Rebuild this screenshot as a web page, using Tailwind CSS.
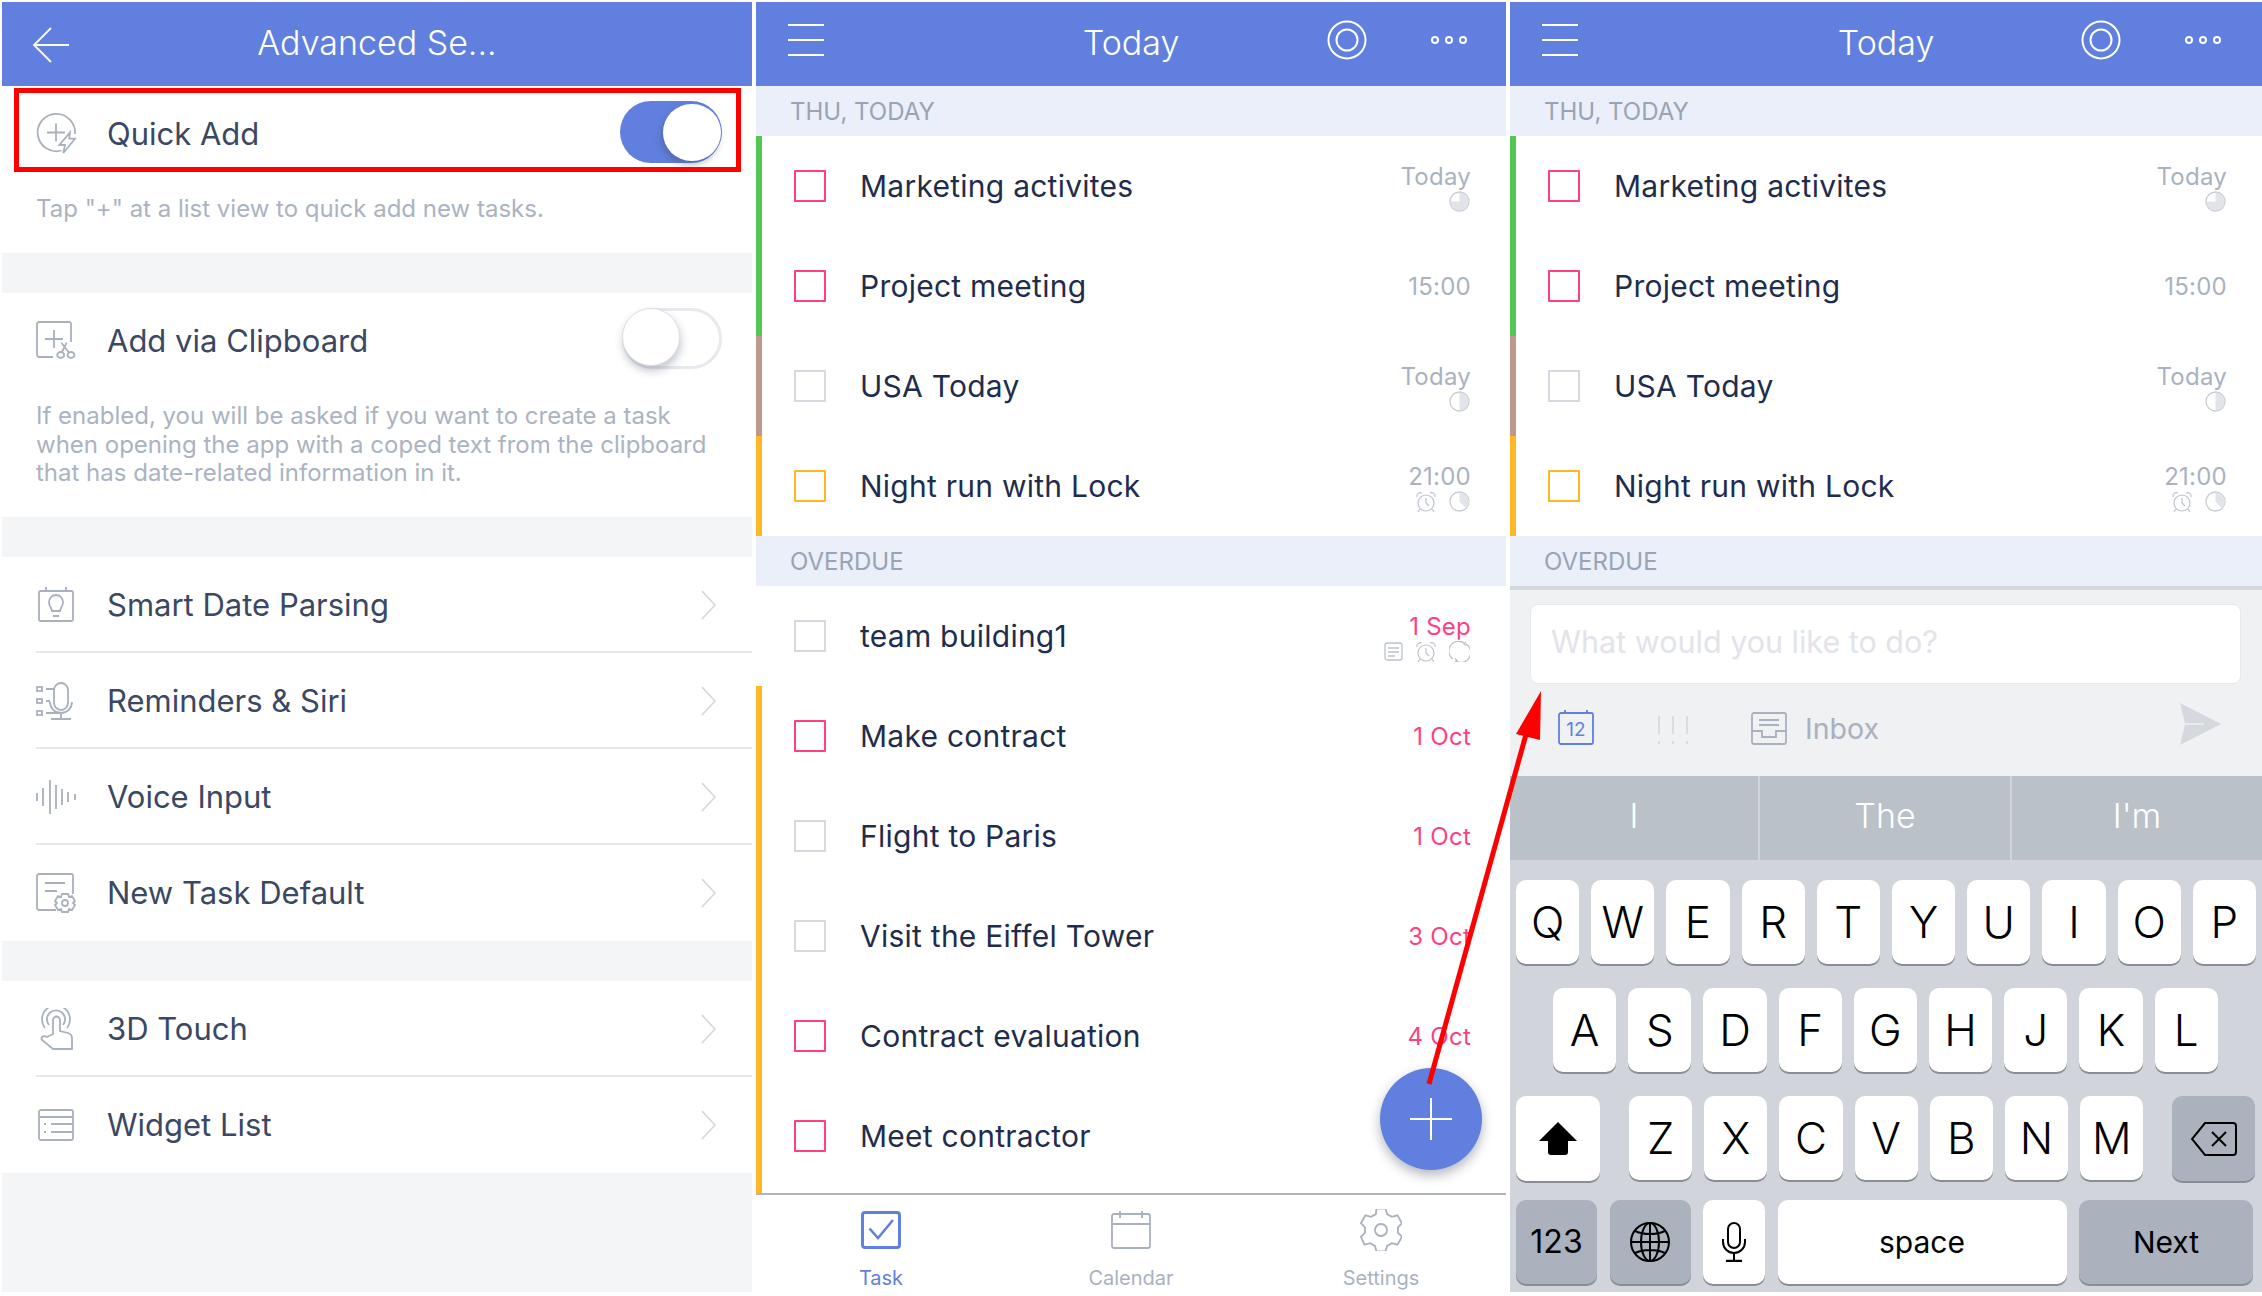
<!DOCTYPE html>
<html lang="en">
<head>
  <meta charset="UTF-8" />
  <title>Quick Add</title>
  <script src="https://cdn.jsdelivr.net/npm/@tailwindcss/browser@4"></script>
</head>
<body class="bg-white font-['Inter',sans-serif]">
<div class="relative w-[2262px] h-[1296px] overflow-hidden flex pl-[2px] pt-[2px] gap-[4px]">

  <!-- Settings panel -->
  <div class="relative w-[750px] h-[1290px] flex flex-col bg-[#f4f5f7] text-[#3a4863]">
    <div class="relative h-[84px] bg-[#617fde] text-white flex items-center justify-center text-[34px] font-light">
      <svg class="absolute left-[30px] top-[25px]" width="38" height="36" viewBox="0 0 38 36" fill="none" stroke="#fff" stroke-width="1.800"><path d="M19 1 2 18l17 17M2 18h35"/></svg>
      <span class="-mt-[4px]">Advanced Se...</span>
    </div>

    <div class="bg-white h-[167px]">
      <div class="h-[94px] flex items-center pl-[34px] pr-[30px]">
        <svg class="w-[40px] h-[40px] overflow-visible" viewBox="0 0 40 40" fill="none" stroke="#a9b0be" stroke-width="1.800"><path d="M39 21A18.700 18.700 0 1 0 25.500 37.500"/><path d="M20 10.500v18M11 19.500h18"/><path d="M34 19.300 23.300 32H29l-1.700 8L39 25.700h-5.700z"/></svg>
        <span class="ml-[31px] text-[31px] mt-[2px]">Quick Add</span>
        <div class="ml-auto -mt-[3px] relative w-[102px] h-[62px] rounded-full bg-[#617fde]">
          <div class="absolute right-[1px] top-[3px] w-[58px] h-[57px] rounded-full bg-white shadow-[-2px_4px_6px_rgba(60,70,90,0.35)]"></div>
        </div>
      </div>
      <p class="pl-[34px] h-[58px] leading-[58px] text-[24px] text-[#abb3c1]">Tap "+" at a list view to quick add new tasks.</p>
    </div>

    <div class="h-[40px] shrink-0"></div>

    <div class="bg-white h-[224px]">
      <div class="h-[94px] flex items-center pl-[34px] pr-[30px]">
        <svg class="w-[40px] h-[38px] overflow-visible" viewBox="0 0 40 38" fill="none" stroke="#a9b0be" stroke-width="1.800"><path d="M17 36H3a2 2 0 0 1-2-2V3a2 2 0 0 1 2-2h30a2 2 0 0 1 2 2v18"/><path d="M18 9v18M9 18h18"/><path d="M25.300 21.700 33.300 32M30.700 21.700 26 31"/><ellipse cx="24.700" cy="34" rx="3.500" ry="3"/><ellipse cx="35" cy="34" rx="3.500" ry="3"/></svg>
        <span class="ml-[31px] text-[31px] mt-[2px]">Add via Clipboard</span>
        <div class="ml-auto -mt-[3px] relative w-[100px] h-[61px] rounded-full bg-white border-[3px] border-[#e8e9ee]">
          <div class="absolute -left-[3px] -top-[3px] w-[58px] h-[58px] rounded-full bg-white border border-[#dfe1e7] shadow-[1px_5px_8px_rgba(60,70,90,0.3)]"></div>
        </div>
      </div>
      <p class="pl-[34px] pt-[15px] text-[24px] leading-[28.5px] text-[#abb3c1]">If enabled, you will be asked if you want to create a task<br>when opening the app with a coped text from the clipboard<br>that has date-related information in it.</p>
    </div>

    <div class="h-[40px] shrink-0"></div>

    <div id="settingsA" class="bg-white"></div>
    <div class="h-[40px] shrink-0"></div>
    <div id="settingsB" class="bg-white"></div>

    <!-- highlight -->
    <div class="absolute left-[12px] top-[86px] w-[727px] h-[84px] border-[5px] border-[#ff0000]"></div>
  </div>

  <!-- Today panel -->
  <div class="relative w-[750px] h-[1290px] flex flex-col bg-white">
    <div class="relative h-[84px] bg-[#617fde] text-white flex items-center justify-center text-[34px] font-light shrink-0">
      <svg class="absolute left-[32px] top-[21px]" width="36" height="34" viewBox="0 0 36 34" stroke="#fff" stroke-width="2"><path d="M0 2h36M0 17h36M0 32h36"/></svg>
      <span class="-mt-[4px]">Today</span>
      <svg class="absolute left-[571px] top-[18px]" width="40" height="40" viewBox="0 0 40 40" fill="none" stroke="#fff" stroke-width="2"><circle cx="20" cy="20" r="18.500"/><circle cx="20" cy="20" r="10.500"/></svg>
      <svg class="absolute left-[675px] top-[33px]" width="36" height="10" viewBox="0 0 36 10" fill="none" stroke="#fff" stroke-width="2"><circle cx="4" cy="5" r="3"/><circle cx="18" cy="5" r="3"/><circle cx="32" cy="5" r="3"/></svg>
    </div>
    <div class="h-[50px] bg-[#eaeffa] pl-[34px] pt-[2px] flex items-center text-[24px] text-[#9aa3b3] shrink-0">THU, TODAY</div>
    <div id="todayRows"></div>
    <div class="h-[50px] bg-[#eaeffa] pl-[34px] pt-[2px] flex items-center text-[24px] text-[#9aa3b3] shrink-0">OVERDUE</div>
    <div id="overdueRows" class="h-[607px] overflow-hidden"></div>
    <div class="flex-1 border-t-2 border-[#aeb4c0] relative text-[20px] text-[#aab2c0]">
      <div class="absolute left-[85px] top-[16px] w-[80px] flex flex-col items-center text-[#617fde]">
        <svg width="40" height="38" viewBox="0 0 40 38" fill="none" stroke="#617fde"><rect x="1.500" y="1.500" width="37" height="35" rx="2.500" stroke-width="3"/><path d="M8.500 17.500l8.500 9.500L32 9" stroke-width="2.500"/></svg>
        <span class="mt-[17px] leading-[24px]">Task</span>
      </div>
      <div class="absolute left-[325px] top-[16px] w-[100px] flex flex-col items-center">
        <svg width="40" height="38" viewBox="0 0 40 38" fill="none" stroke="#a9b0be" stroke-width="1.800"><rect x="1" y="3" width="38" height="34" rx="2"/><path d="M1 13h38M9 0v7M31 0v7"/></svg>
        <span class="mt-[17px] leading-[24px]">Calendar</span>
      </div>
      <div class="absolute left-[575px] top-[14px] w-[100px] flex flex-col items-center">
        <svg width="42" height="42" viewBox="0 0 42 42" fill="none" stroke="#a9b0be" stroke-width="1.800"><path d="M16.500 1.500h9l1.600 5.600 4.700 2.700 5.700-1.400 4.500 7.800-4.100 4.200v5.200l4.100 4.200-4.500 7.800-5.700-1.400-4.700 2.700-1.600 5.600h-9l-1.600-5.600-4.700-2.700-5.700 1.400L.9 29.800 5 25.600v-5.200L.9 16.200l4.500-7.800 5.700 1.400 4.700-2.700z" transform="translate(0 -2)"/><circle cx="21" cy="21" r="6"/></svg>
        <span class="mt-[15px] leading-[24px]">Settings</span>
      </div>
    </div>
    <div class="absolute left-[624px] top-[1066px] w-[102px] h-[102px] rounded-full bg-[#617fde] shadow-[0_5px_12px_rgba(60,70,90,0.4)] flex items-center justify-center">
      <svg width="42" height="42" viewBox="0 0 42 42" stroke="#fff" stroke-width="2"><path d="M21 0v42M0 21h42"/></svg>
    </div>
  </div>

  <!-- Quick add panel -->
  <div class="relative w-[752px] h-[1290px] flex flex-col bg-white">
    <div class="relative h-[84px] bg-[#617fde] text-white flex items-center justify-center text-[34px] font-light shrink-0">
      <svg class="absolute left-[32px] top-[21px]" width="36" height="34" viewBox="0 0 36 34" stroke="#fff" stroke-width="2"><path d="M0 2h36M0 17h36M0 32h36"/></svg>
      <span class="-mt-[4px]">Today</span>
      <svg class="absolute left-[571px] top-[18px]" width="40" height="40" viewBox="0 0 40 40" fill="none" stroke="#fff" stroke-width="2"><circle cx="20" cy="20" r="18.500"/><circle cx="20" cy="20" r="10.500"/></svg>
      <svg class="absolute left-[675px] top-[33px]" width="36" height="10" viewBox="0 0 36 10" fill="none" stroke="#fff" stroke-width="2"><circle cx="4" cy="5" r="3"/><circle cx="18" cy="5" r="3"/><circle cx="32" cy="5" r="3"/></svg>
    </div>
    <div class="h-[50px] bg-[#eaeffa] pl-[34px] pt-[2px] flex items-center text-[24px] text-[#9aa3b3] shrink-0">THU, TODAY</div>
    <div id="todayRows2"></div>
    <div class="h-[50px] bg-[#eaeffa] pl-[34px] pt-[2px] flex items-center text-[24px] text-[#9aa3b3] shrink-0">OVERDUE</div>

    <div class="h-[190px] shrink-0 bg-[#eff1f3] border-t-[4px] border-[#d5d7de] pl-[20px] pr-[21px] pt-[14px]">
      <div class="h-[80px] rounded-[8px] bg-white border border-[#e8e9ed] flex items-center pl-[20px] pb-[4px] text-[30.500px] text-[#e2e4e9]">What would you like to do?</div>
      <div class="relative mt-[26px] flex items-center h-[40px] text-[28.500px] text-[#a9b0be]">
        <svg class="absolute left-[28px] top-0" width="36" height="35" viewBox="0 0 36 35" fill="none" stroke="#617fde" stroke-width="1.800"><rect x="1" y="3" width="34" height="31" rx="2"/><path d="M7 0v4M29 0v4"/><text x="18" y="26" text-anchor="middle" font-size="19" fill="#617fde" stroke="none" font-family="Inter">12</text></svg>
        <svg class="absolute left-[128px] top-[6px]" width="30" height="28" viewBox="0 0 30 28" stroke="#d4d7dd" stroke-width="1.600"><path d="M1 0v18M15 0v18M29 0v18M1 25v3M15 25v3M29 25v3"/></svg>
        <svg class="absolute left-[221px] top-[2px]" width="36" height="33" viewBox="0 0 36 33" fill="none" stroke="#a9b0be" stroke-width="1.800"><rect x="1" y="1" width="34" height="31" rx="2"/><path d="M8 8h20M8 13h20M1 19h10v6h14v-6h10"/></svg>
        <span class="absolute left-[275px] top-[1px] leading-[36px]">Inbox</span>
        <svg class="absolute left-[650px] -top-[7px]" width="42" height="42" viewBox="0 0 42 42"><path d="M0 0 41 21 0 42l5-21z" fill="#d5d8dd"/><path d="M5 21h19" stroke="#eff1f3" stroke-width="1.500"/></svg>
      </div>
    </div>

    <div class="h-[84px] shrink-0 bg-[#bac1c9] flex text-white text-[34px] font-light">
      <div class="w-[250px] flex items-center justify-center border-r-2 border-[#d1d5db] pb-[6px]">I</div>
      <div class="w-[252px] flex items-center justify-center border-r-2 border-[#d1d5db] pb-[6px]">The</div>
      <div class="flex-1 flex items-center justify-center pb-[6px]">I'm</div>
    </div>

    <div id="keyboard" class="flex-1 bg-[#d1d5db] text-black text-[44px] font-light">
      <div id="row1" class="flex gap-[12px] pl-[6px] pt-[20px]"></div>
      <div id="row2" class="flex gap-[12px] pl-[43px] pt-[24px]"></div>
      <div class="flex pl-[6px] pt-[24px]">
        <div class="w-[84px] h-[85px] rounded-[10px] bg-white shadow-[0_2px_0_#8a8d94] flex items-center justify-center">
          <svg width="38" height="33" viewBox="0 0 38 33"><path d="M19 0 38 19H29V30a3 3 0 0 1-3 3H12a3 3 0 0 1-3-3V19H0z" fill="#000"/></svg>
        </div>
        <div id="row3" class="flex gap-[12px] ml-[29px]"></div>
        <div class="ml-[29px] w-[83px] h-[85px] rounded-[10px] bg-[#abb1bd] shadow-[0_2px_0_#8a8d94] flex items-center justify-center">
          <svg width="46" height="34" viewBox="0 0 46 34" fill="none" stroke="#000" stroke-width="2"><path d="M14 1h28a3 3 0 0 1 3 3v26a3 3 0 0 1-3 3H14L1 17z"/><path d="M21 10l14 14M35 10 21 24"/></svg>
        </div>
      </div>
      <div class="flex gap-[12.5px] pl-[6px] pt-[19px] text-[32px] font-normal">
        <div class="w-[81px] h-[84px] rounded-[10px] bg-[#abb1bd] shadow-[0_2px_0_#8a8d94] flex items-center justify-center">123</div>
        <div class="w-[81px] h-[84px] rounded-[10px] bg-[#abb1bd] shadow-[0_2px_0_#8a8d94] flex items-center justify-center">
          <svg width="40" height="40" viewBox="0 0 40 40" fill="none" stroke="#000" stroke-width="2"><circle cx="20" cy="20" r="19"/><ellipse cx="20" cy="20" rx="9" ry="19"/><path d="M20 1v38M1 20h38M5 9c8 4 22 4 30 0M5 31c8-4 22-4 30 0"/></svg>
        </div>
        <div class="w-[62px] h-[84px] rounded-[10px] bg-white shadow-[0_2px_0_#8a8d94] flex items-center justify-center">
          <svg width="24" height="40" viewBox="0 0 24 40" fill="none" stroke="#000" stroke-width="2"><rect x="6" y="1" width="12" height="25" rx="6"/><path d="M1 17v3a11 11 0 0 0 22 0v-3M12 31v7"/><path d="M4 39h16" stroke-width="2.500"/></svg>
        </div>
        <div class="w-[289px] h-[84px] rounded-[10px] bg-white shadow-[0_2px_0_#8a8d94] flex items-center justify-center text-[30px]">space</div>
        <div class="w-[174px] h-[84px] rounded-[10px] bg-[#abb1bd] shadow-[0_2px_0_#8a8d94] flex items-center justify-center text-[30px]">Next</div>
      </div>
    </div>
  </div>

  <!-- annotation arrow -->
  <svg class="absolute left-0 top-0 pointer-events-none" width="2262" height="1296" viewBox="0 0 2262 1296">
    <path d="M1429 1084 1530 720" stroke="#ff0000" stroke-width="5" fill="none"/>
    <path d="M1541 691 1516 734 1540 740z" fill="#ff0000"/>
  </svg>
</div>

<script>
  const chevron = '<svg class="ml-auto" width="15" height="30" viewBox="0 0 15 30" fill="none" stroke="#d3d6dc" stroke-width="1.600"><path d="M1 1l13 14L1 29"/></svg>';
  const gray = 'fill="none" stroke="#a9b0be" stroke-width="1.800"';
  const icons = {
    date: `<svg width="40" height="36" viewBox="0 0 40 36" ${gray}><rect x="3" y="4" width="34" height="30" rx="1.500"/><path d="M10 0v5M30 0v5"/><path d="M16 24c0-3-3-4-3-9a7 7 0 0 1 14 0c0 5-3 6-3 9zM17 29h6"/></svg>`,
    siri: `<svg width="40" height="38" viewBox="0 0 40 38" ${gray}><rect x="1" y="5" width="5" height="4"/><rect x="1" y="17" width="5" height="4"/><rect x="1" y="29" width="5" height="4"/><path d="M10 7h8M10 19h4M10 31h13"/><rect x="18" y="1" width="14" height="27" rx="7"/><path d="M14 20a11 11 0 0 0 22 0M25 31v6M15 37h20"/></svg>`,
    voice: `<svg width="40" height="36" viewBox="0 0 40 36" ${gray}><path d="M1 14v8M7 9v18M14 1v34M20 6v24M26 10v16M32 13v10M39 15v6"/></svg>`,
    task: `<svg width="40" height="40" viewBox="0 0 40 40" ${gray}><path d="M20 37H3a2 2 0 0 1-2-2V3a2 2 0 0 1 2-2h32a2 2 0 0 1 2 2v18"/><path d="M9 10h20M9 18h12"/><path d="M26 21h6l1 3 3-1 3 5-2 2 2 2-3 5-3-1-1 3h-6l-1-3-3 1-3-5 2-2-2-2 3-5 3 1z"/><circle cx="29" cy="30" r="3"/></svg>`,
    touch: `<svg width="40" height="42" viewBox="0 0 40 42" ${gray}><path d="M9 20a14 14 0 1 1 22 0"/><path d="M13 17a9 9 0 1 1 14 0"/><path d="M17 26V12a3.500 3.500 0 0 1 7 0v11l8 2c3 1 4 3 4 5v11H17l-11-9c-2-3 2-5 5-3z"/></svg>`,
    list: `<svg width="40" height="32" viewBox="0 0 40 32" ${gray}><rect x="3" y="1" width="34" height="30" rx="2"/><path d="M3 8h34M15 15h22M15 23h22M8 15h2M8 23h2"/></svg>`
  };
  const row = (icon, label, last) => `<div class="relative h-[96px] flex items-center pl-[34px] pr-[36px] text-[31px]">
    <div class="w-[40px] flex justify-center">${icons[icon]}</div><span class="ml-[31px]">${label}</span>${chevron}
    ${last ? '' : '<div class="absolute left-[34px] right-0 bottom-0 h-[2px] bg-[#e7e8ec]"></div>'}</div>`;
  document.getElementById('settingsA').innerHTML = row('date','Smart Date Parsing') + row('siri','Reminders &amp; Siri') + row('voice','Voice Input') + row('task','New Task Default',true);
  document.getElementById('settingsB').innerHTML = row('touch','3D Touch') + row('list','Widget List',true);

  const pie = d => `<svg width="21" height="21" viewBox="0 0 21 21"><circle cx="10.500" cy="10.500" r="9.500" fill="#fff" stroke="#c9cdd6" stroke-width="1.300"/><path d="${d}" fill="#e3e4ea"/></svg>`;
  const pie34 = pie('M10.500 10.500V1.500A9 9 0 1 1 1.500 10.500Z');
  const pie12 = pie('M10.500 1.500A9 9 0 0 1 10.500 19.500Z');
  const pie38 = pie('M10.500 10.500V1.500A9 9 0 0 1 17 17Z');
  const alarm = '<svg width="22" height="22" viewBox="0 0 22 22" fill="none" stroke="#bcc2cd" stroke-width="1.200"><circle cx="11" cy="12" r="8"/><path d="M11 7v5l3 3M2 6a3.500 3.500 0 0 1 5-4M20 6a3.500 3.500 0 0 0-5-4M5 18l-2 3M17 18l2 3"/></svg>';
  const note = '<svg width="19" height="19" viewBox="0 0 19 19" fill="none" stroke="#bcc2cd" stroke-width="1.300"><rect x="1" y="1" width="17" height="17" rx="2"/><path d="M4 6h11M4 10h11M4 14h7"/></svg>';
  const loop = '<svg width="21" height="21" viewBox="0 0 21 21" fill="none" stroke="#bcc2cd" stroke-width="1.300"><path d="M4 18A9.500 9.500 0 0 1 15 2M17 3A9.500 9.500 0 0 1 7 20"/><path d="M17 1l-2 1.500 2 2M6 17.500l2 2-2 1.500"/></svg>';

  const pinkBox = 'w-[32px] h-[32px] border-2 border-[#ff3f7f] rounded-[1px]';
  const greyBox = 'w-[32px] h-[32px] border-2 border-[#d6d9e0] rounded-[1px]';
  const yellowBox = 'w-[32px] h-[32px] border-2 border-[#ffb727] rounded-[1px]';
  const green = 'border-[#52c653]', brown = 'border-[#bb9a8b]', yellow = 'border-[#ffb727]', none = 'border-white';

  const meta = (date, color, extras) => `<div class="ml-auto pr-[35px] flex flex-col items-end ${extras ? 'pt-[6px]' : ''}">
    <span class="text-[24px] leading-[25px] ${color}">${date}</span>
    ${extras ? `<div class="h-[26px] flex items-center justify-end gap-[12px] pr-[1px]">${extras}</div>` : ''}</div>`;
  const task = (stripe, box, title, date, color, extras) => `<div class="h-[100px] flex items-center border-l-[6px] ${stripe} pl-[32px] text-[30px] tracking-[0.25px] text-[#1f2d4d]">
    <div class="${box}"></div><span class="ml-[34px]">${title}</span>${meta(date, color, extras)}</div>`;

  const muted = 'text-[#aab2c0]', pink = 'text-[#ff3f7f]';
  const today = [
    task(green, pinkBox, 'Marketing activites', 'Today', muted, pie34),
    task(green, pinkBox, 'Project meeting', '15:00', muted),
    task(brown, greyBox, 'USA Today', 'Today', muted, pie12),
    task(yellow, yellowBox, 'Night run with Lock', '21:00', muted, alarm + pie38)
  ].join('');
  document.getElementById('todayRows').innerHTML = today;
  document.getElementById('todayRows2').innerHTML = today;
  document.getElementById('overdueRows').innerHTML = [
    task(none, greyBox, 'team building1', '1 Sep', pink, note + alarm + loop),
    task(yellow, pinkBox, 'Make contract', '1 Oct', pink),
    task(yellow, greyBox, 'Flight to Paris', '1 Oct', pink),
    task(yellow, greyBox, 'Visit the Eiffel Tower', '3 Oct', pink),
    task(yellow, pinkBox, 'Contract evaluation', '4 Oct', pink),
    task(yellow, pinkBox, 'Meet contractor', '', pink)
  ].join('') + '<div class="h-[10px] border-l-[6px] border-[#ffb727]"></div>';

  const keys = s => [...s].map(c => `<div class="w-[63.200px] h-[84px] rounded-[10px] bg-white shadow-[0_2px_0_#8a8d94] flex items-center justify-center">${c}</div>`).join('');
  document.getElementById('row1').innerHTML = keys('QWERTYUIOP');
  document.getElementById('row2').innerHTML = keys('ASDFGHJKL');
  document.getElementById('row3').innerHTML = keys('ZXCVBNM');
</script>
</body>
</html>
